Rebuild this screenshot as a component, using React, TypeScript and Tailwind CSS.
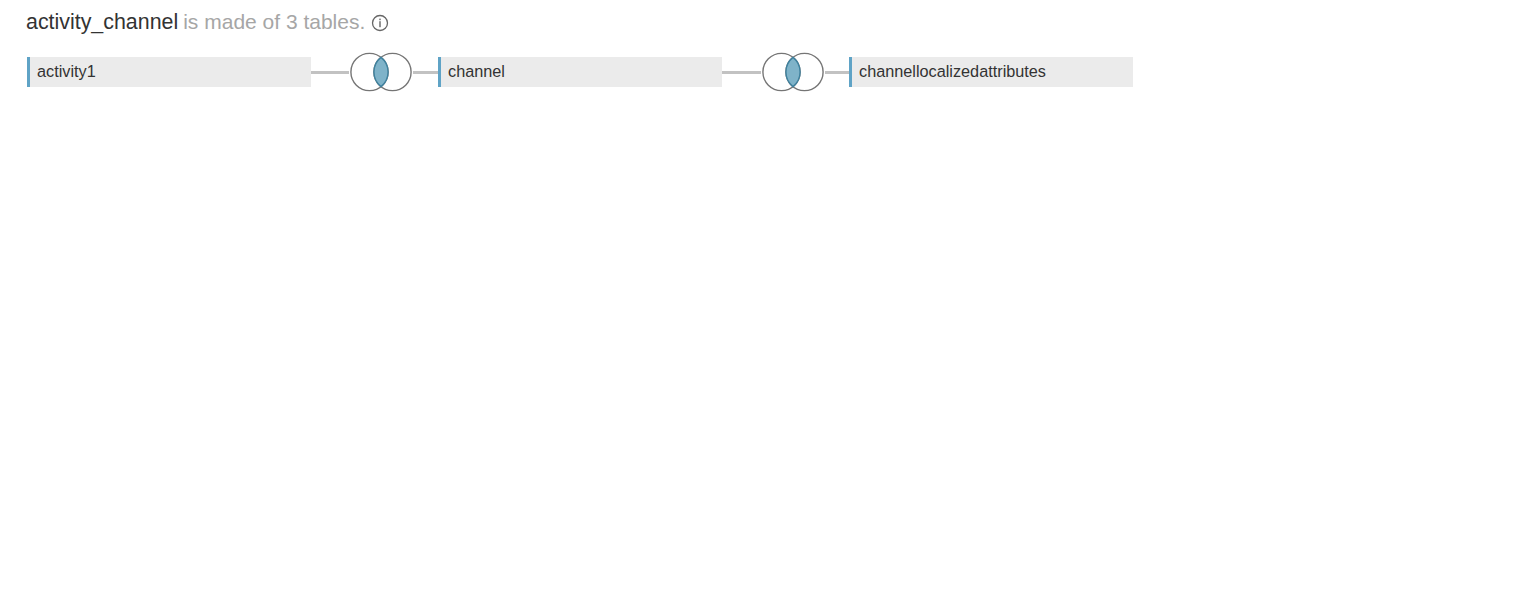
import React from 'react';

const TABLES = ['activity1', 'channel', 'channellocalizedattributes'];

const InfoIcon: React.FC = () => (
  <svg width="18" height="18" viewBox="0 0 18 18" fill="none" className="ml-[6px] shrink-0">
    <circle cx="9" cy="9" r="7.5" stroke="#666666" strokeWidth="1.3" />
    <rect x="8.3" y="4.6" width="1.4" height="1.6" fill="#666666" />
    <rect x="8.3" y="7.2" width="1.4" height="6" fill="#666666" />
  </svg>
);

const JoinIcon: React.FC = () => (
  <svg width="62" height="40" viewBox="0 0 62 40" fill="none" className="mt-[1px] shrink-0">
    <circle cx="19.5" cy="20" r="18.6" stroke="#757575" strokeWidth="1.4" />
    <circle cx="42.5" cy="20" r="18.6" stroke="#757575" strokeWidth="1.4" />
    <path
      d="M31 5.4 A18.6 18.6 0 0 1 31 34.6 A18.6 18.6 0 0 1 31 5.4 Z"
      fill="#7fb3c9"
      stroke="#3f829f"
      strokeWidth="1.4"
    />
  </svg>
);

const TableBox: React.FC<{ name: string }> = ({ name }) => (
  <div className="flex h-[30px] w-[284px] shrink-0 items-center border-l-[3px] border-[#5fa3c6] bg-[#ebebeb] pl-[7px] text-[16.25px] text-[#333333]">
    {name}
  </div>
);

const Connector: React.FC<{ second?: boolean }> = ({ second }) => (
  <div className="flex w-[127px] shrink-0 items-center">
    <div className={second ? 'mt-[2px] h-[3px] w-[39px] bg-[#c2c2c2]' : 'mt-[2px] h-[3px] w-[38px] bg-[#c2c2c2]'} />
    <div className="ml-[1px]">
      <JoinIcon />
    </div>
    <div className={second ? 'mt-[2px] ml-[1px] h-[3px] w-[24px] bg-[#c2c2c2]' : 'mt-[2px] ml-[1px] h-[3px] w-[25px] bg-[#c2c2c2]'} />
  </div>
);

const App: React.FC = () => {
  return (
    <div className="h-[592px] w-full bg-white pl-[26px] font-['Liberation_Sans',Arial,sans-serif]">
      <div className="flex h-[43px] items-center pt-[2px] text-[#a6a6a6]">
        <div className="flex items-baseline">
          <span className="text-[21.4px] text-[#333333]">activity_channel</span>
          <span className="ml-[5px] text-[21px]">is made of 3 tables.</span>
        </div>
        <InfoIcon />
      </div>
      <div className="ml-[1px] mt-[8px] flex items-center">
        {TABLES.map((name, i) => (
          <React.Fragment key={name}>
            <TableBox name={name} />
            {i < TABLES.length - 1 && <Connector second={i === 1} />}
          </React.Fragment>
        ))}
      </div>
    </div>
  );
};

export default App;
